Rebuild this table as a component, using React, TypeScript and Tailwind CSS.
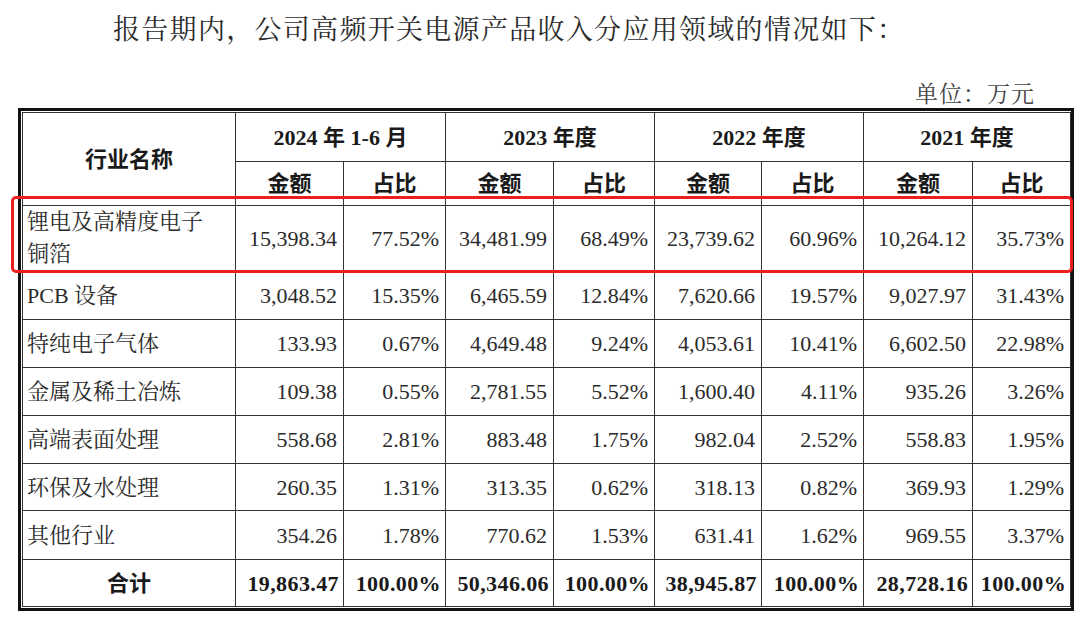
import { Fragment } from "react";

const serif = "font-['Liberation_Serif','Noto_Serif_CJK_SC','Noto_Sans_CJK_SC',serif]";
const bold = "font-['Liberation_Serif','Noto_Sans_CJK_SC',sans-serif] font-bold";

const colWidths = [213, 108, 102, 108, 101, 107, 102, 109, 98];
const periods = ["2024 年 1-6 月", "2023 年度", "2022 年度", "2021 年度"];

const rows: { name: string; values: string[]; h: string }[] = [
  { name: "PCB 设备", values: ["3,048.52", "15.35%", "6,465.59", "12.84%", "7,620.66", "19.57%", "9,027.97", "31.43%"], h: "h-[49px]" },
  { name: "特纯电子气体", values: ["133.93", "0.67%", "4,649.48", "9.24%", "4,053.61", "10.41%", "6,602.50", "22.98%"], h: "h-[48px]" },
  { name: "金属及稀土冶炼", values: ["109.38", "0.55%", "2,781.55", "5.52%", "1,600.40", "4.11%", "935.26", "3.26%"], h: "h-[48px]" },
  { name: "高端表面处理", values: ["558.68", "2.81%", "883.48", "1.75%", "982.04", "2.52%", "558.83", "1.95%"], h: "h-[48px]" },
  { name: "环保及水处理", values: ["260.35", "1.31%", "313.35", "0.62%", "318.13", "0.82%", "369.93", "1.29%"], h: "h-[47px]" },
  { name: "其他行业", values: ["354.26", "1.78%", "770.62", "1.53%", "631.41", "1.62%", "969.55", "3.37%"], h: "h-[49px]" },
];

const firstRow = ["15,398.34", "77.52%", "34,481.99", "68.49%", "23,739.62", "60.96%", "10,264.12", "35.73%"];
const totals = ["19,863.47", "100.00%", "50,346.06", "100.00%", "38,945.87", "100.00%", "28,728.16", "100.00%"];

const cell = "border border-[#333] p-0";
const head = `${cell} ${bold} text-[22px] text-[#1a1a1a] text-center`;

export default function App() {
  return (
    <div className="w-[1080px] h-[620px] bg-white overflow-hidden text-[#2b2b2b]">
      <p className={`${serif} pl-[113px] pt-[12px] text-[27px] leading-[36px] tracking-[1.3px]`}>
        报告期内，公司高频开关电源产品收入分应用领域的情况如下：
      </p>
      <div className={`${serif} mt-[34px] h-[26px] flex justify-end pr-[45px] text-[23px] leading-[26px] tracking-[1px] text-[#444]`}>
        单位：万元
      </div>

      <div className="relative ml-[18px] w-[1056px] border-[3px] border-[#111] p-[1px]">
        <table className="table-fixed border-collapse w-[1048px]">
          <colgroup>
            {colWidths.map((w, i) => (
              <col key={i} style={{ width: w }} />
            ))}
          </colgroup>
          <thead>
            <tr className="h-[49px]">
              <th rowSpan={2} className={head}>
                行业名称
              </th>
              {periods.map((p) => (
                <th key={p} colSpan={2} className={head}>
                  {p}
                </th>
              ))}
            </tr>
            <tr className="h-[44px]">
              {periods.map((p) => (
                <Fragment key={p}>
                  <th className={head}>金额</th>
                  <th className={head}>占比</th>
                </Fragment>
              ))}
            </tr>
          </thead>
          <tbody className={`${serif} text-[22px]`}>
            <tr className="h-[63px]">
              <td className={`${cell} pl-[4px] leading-[32px] text-left`}>
                锂电及高精度电子
                <br />
                铜箔
              </td>
              {firstRow.map((v, i) => (
                <td key={i} className={`${cell} pr-[6px] text-right`}>
                  {v}
                </td>
              ))}
            </tr>
            {rows.map((r) => (
              <tr key={r.name} className={r.h}>
                <td className={`${cell} pl-[4px] text-left`}>{r.name}</td>
                {r.values.map((v, i) => (
                  <td key={i} className={`${cell} pr-[6px] text-right`}>
                    {v}
                  </td>
                ))}
              </tr>
            ))}
            <tr className="h-[47px]">
              <td className={`${cell} ${bold} text-center text-[#1a1a1a]`}>合计</td>
              {totals.map((v, i) => (
                <td key={i} className={`${cell} ${bold} pr-[4px] text-right tracking-[0.4px] text-[#1a1a1a]`}>
                  {v}
                </td>
              ))}
            </tr>
          </tbody>
        </table>

        {/* highlight around the first data row */}
        <div className="absolute left-[-10px] top-[85px] w-[1062px] h-[77px] border-[3px] border-[#ec1f1f] rounded-[5px] pointer-events-none" />
      </div>
    </div>
  );
}
